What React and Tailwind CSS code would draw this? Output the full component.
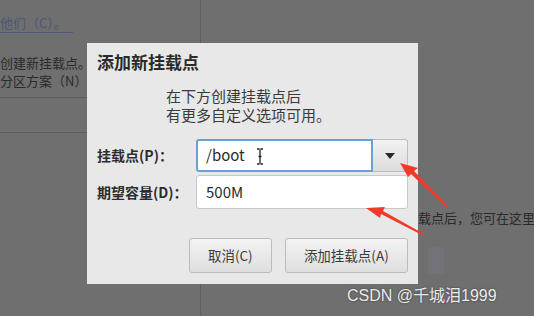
import React from "react";

export default function App() {
  const font = { fontFamily: '"Noto Sans CJK SC", "Noto Sans", sans-serif' };
  return (
    <div className="relative w-[534px] h-[316px] overflow-hidden bg-[#6f6f6f]" style={font}>
      {/* background window content */}
      <div className="absolute left-[200px] top-0 w-px h-[43px] bg-[#5e5e5e]" />
      <div className="absolute left-[200px] top-[284px] w-px h-[32px] bg-[#5e5e5e]" />
      <div className="absolute left-0 top-[97px] w-[87px] h-px bg-[#5f5f5f]" />
      <div className="absolute left-0 top-[132px] w-[87px] h-px bg-[#5f5f5f]" />
      <div className="absolute left-0 top-[14px] text-[13px] leading-[18px] text-[#4b5878] border-b border-[#4b5878] pr-[6px] whitespace-nowrap">
        他们（C）。
      </div>
      <div className="absolute left-0 top-[54px] text-[13px] leading-[18px] text-[#2a2a2a] whitespace-nowrap">
        创建新挂载点。
      </div>
      <div className="absolute left-0 top-[72px] text-[13px] leading-[18px] text-[#2a2a2a] whitespace-nowrap">
        分区方案（N）
      </div>
      <div className="absolute left-[418px] top-[209px] text-[13px] leading-[18px] text-[#2a2a2a] whitespace-nowrap">
        载点后，您可在这里
      </div>
      <div className="absolute left-[428px] top-[247px] w-[16px] h-[27px] bg-[#727278]" />

      {/* dialog */}
      <div className="absolute left-[87px] top-[43px] w-[331px] h-[241px] bg-[#e8e8e8] flex flex-col px-[10px] pt-[8px]">
        <div className="text-[17px] leading-[22px] font-bold text-[#2a2a2a]">添加新挂载点</div>
        <div className="pl-[69px] mt-[13px] text-[15px] leading-[19px] text-[#3a3a3a] flex flex-col">
          <span>在下方创建挂载点后</span>
          <span>有更多自定义选项可用。</span>
        </div>
        <div className="mt-[15px] flex items-center h-[33px]">
          <div className="w-[99px] text-[14px] font-semibold text-[#2d2d2d]">挂载点(P)：</div>
          <div className="flex h-[33px] w-[212px]">
            <div className="relative flex-1 bg-white border-2 border-[#6a9fd8] rounded-l-[3px] flex items-center pl-[8px] text-[15px] text-[#2a2a2a]">
              /boot
              <svg className="absolute left-[58px] top-[7px]" width="8" height="17" viewBox="0 0 8 17">
                <path d="M1 1h2.5M4.5 1H7M4 1.5v14M1 16h2.5M4.5 16H7M2.5 8.5h3" stroke="#222" strokeWidth="1.3" fill="none" />
              </svg>
            </div>
            <div className="w-[35px] border border-l-0 border-[#bdbdbd] rounded-r-[3px] bg-gradient-to-b from-[#f2f2f2] to-[#dcdcdc] flex items-center justify-center">
              <svg width="10" height="6" viewBox="0 0 10 6">
                <path d="M0 0h10L5 6z" fill="#2a2a2a" />
              </svg>
            </div>
          </div>
        </div>
        <div className="mt-[3px] flex items-center h-[34px]">
          <div className="w-[99px] text-[14px] font-semibold text-[#2d2d2d]">期望容量(D)：</div>
          <div className="w-[212px] h-[34px] bg-white border border-[#c8c8c8] rounded-[3px] flex items-center pl-[9px] text-[15px] text-[#2a2a2a]">
            500M
          </div>
        </div>
        <div className="mt-[29px] flex gap-[13px] pl-[92px]">
          <div className="w-[83px] h-[35px] rounded-[3px] border border-[#bcbcbc] bg-gradient-to-b from-[#f3f3f3] to-[#dedede] flex items-center justify-center text-[13.5px] text-[#3a3a3a]">
            取消(C)
          </div>
          <div className="w-[124px] h-[35px] rounded-[3px] border border-[#bcbcbc] bg-gradient-to-b from-[#f3f3f3] to-[#dedede] flex items-center justify-center text-[13.5px] text-[#3a3a3a]">
            添加挂载点(A)
          </div>
        </div>
      </div>

      {/* red arrows */}
      <svg className="absolute left-0 top-0" width="534" height="316" viewBox="0 0 534 316">
        <path d="M400 163 L418 168 L414 171 L448 206 L446 207 L411 174 L408 177 Z" fill="#f23a2a" />
        <path d="M366 208 L385 207 L383 211 L424 234 L422 235 L381 214 L380 218 Z" fill="#f23a2a" />
      </svg>

      <div
        className="absolute left-[347px] top-[285px] text-[16px] leading-[22px] text-[#ececec] whitespace-nowrap"
        style={{ fontFamily: '"Liberation Sans", "Noto Sans CJK SC", sans-serif', textShadow: "0 0 2px #333" }}
      >
        CSDN @千城泪1999
      </div>
    </div>
  );
}
